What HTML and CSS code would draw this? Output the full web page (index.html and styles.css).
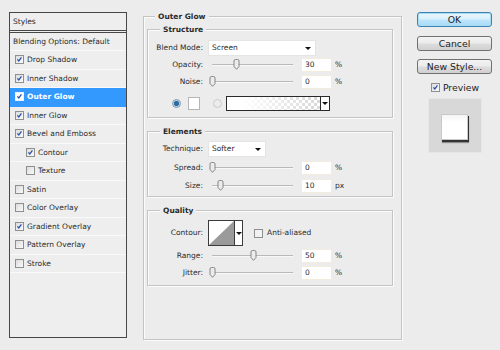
FILE: index.html
```html
<!DOCTYPE html>
<html>
<head>
<meta charset="utf-8">
<link rel="stylesheet" href="styles.css">
</head>
<body>
<div class="dialog">
  <div class="styles-panel">
    <div class="sp-head">Styles</div>
    <div class="sp-blend">Blending Options: Default</div>
    <div class="sp-row"><span class="cb on"><svg viewBox="0 0 9 9"><path d="M1.8 4.3 L3.6 6.4 L7 1.8"/></svg></span>Drop Shadow</div>
    <div class="sp-row"><span class="cb on"><svg viewBox="0 0 9 9"><path d="M1.8 4.3 L3.6 6.4 L7 1.8"/></svg></span>Inner Shadow</div>
    <div class="sp-row sel"><span class="cb on"><svg viewBox="0 0 9 9"><path d="M1.8 4.3 L3.6 6.4 L7 1.8"/></svg></span>Outer Glow</div>
    <div class="sp-row"><span class="cb on"><svg viewBox="0 0 9 9"><path d="M1.8 4.3 L3.6 6.4 L7 1.8"/></svg></span>Inner Glow</div>
    <div class="sp-row"><span class="cb on"><svg viewBox="0 0 9 9"><path d="M1.8 4.3 L3.6 6.4 L7 1.8"/></svg></span>Bevel and Emboss</div>
    <div class="sp-row sub"><span class="cb on"><svg viewBox="0 0 9 9"><path d="M1.8 4.3 L3.6 6.4 L7 1.8"/></svg></span>Contour</div>
    <div class="sp-row sub"><span class="cb"></span>Texture</div>
    <div class="sp-row"><span class="cb"></span>Satin</div>
    <div class="sp-row"><span class="cb"></span>Color Overlay</div>
    <div class="sp-row"><span class="cb on"><svg viewBox="0 0 9 9"><path d="M1.8 4.3 L3.6 6.4 L7 1.8"/></svg></span>Gradient Overlay</div>
    <div class="sp-row"><span class="cb"></span>Pattern Overlay</div>
    <div class="sp-row"><span class="cb"></span>Stroke</div>
  </div>

  <div class="group outer">
    <div class="group-title">Outer Glow</div>

    <div class="group sub structure">
      <div class="group-title">Structure</div>
      <div class="row r-blend">
        <span class="lbl">Blend Mode:</span>
        <div class="select w-blend"><span>Screen</span><i class="arrow"></i></div>
      </div>
      <div class="row r-num m2">
        <span class="lbl">Opacity:</span>
        <div class="slider"><span class="thumb" style="left:30%"><svg viewBox="0 0 7 11"><path d="M1 2 Q1 0.5 2.5 0.5 H4.5 Q6 0.5 6 2 V7.5 L3.5 10.3 L1 7.5 Z"/></svg></span></div>
        <div class="num">30</div><span class="unit">%</span>
      </div>
      <div class="row r-num m3">
        <span class="lbl">Noise:</span>
        <div class="slider"><span class="thumb" style="left:0%"><svg viewBox="0 0 7 11"><path d="M1 2 Q1 0.5 2.5 0.5 H4.5 Q6 0.5 6 2 V7.5 L3.5 10.3 L1 7.5 Z"/></svg></span></div>
        <div class="num">0</div><span class="unit">%</span>
      </div>
      <div class="row r-color">
        <span class="radio on"></span>
        <span class="swatch"></span>
        <span class="radio off"></span>
        <div class="gradbox"><div class="grad"></div><div class="gdrop"><i class="arrow"></i></div></div>
      </div>
    </div>

    <div class="group sub elements">
      <div class="group-title">Elements</div>
      <div class="row r-blend m4">
        <span class="lbl">Technique:</span>
        <div class="select w-tech"><span>Softer</span><i class="arrow"></i></div>
      </div>
      <div class="row r-num m4">
        <span class="lbl">Spread:</span>
        <div class="slider"><span class="thumb" style="left:0%"><svg viewBox="0 0 7 11"><path d="M1 2 Q1 0.5 2.5 0.5 H4.5 Q6 0.5 6 2 V7.5 L3.5 10.3 L1 7.5 Z"/></svg></span></div>
        <div class="num">0</div><span class="unit">%</span>
      </div>
      <div class="row r-num m4">
        <span class="lbl">Size:</span>
        <div class="slider"><span class="thumb" style="left:10%"><svg viewBox="0 0 7 11"><path d="M1 2 Q1 0.5 2.5 0.5 H4.5 Q6 0.5 6 2 V7.5 L3.5 10.3 L1 7.5 Z"/></svg></span></div>
        <div class="num">10</div><span class="unit">px</span>
      </div>
    </div>

    <div class="group sub quality">
      <div class="group-title">Quality</div>
      <div class="row r-contour">
        <span class="lbl">Contour:</span>
        <div class="contour">
          <svg class="cgraph" viewBox="0 0 25 24" preserveAspectRatio="none"><rect width="25" height="24" fill="#fff"/><path d="M0 24 L25 0 L25 24 Z" fill="#9a9a9a"/></svg>
          <div class="cdrop"><i class="arrow"></i></div>
        </div>
        <span class="cb aa"></span><span class="aa-text">Anti-aliased</span>
      </div>
      <div class="row r-num m3">
        <span class="lbl">Range:</span>
        <div class="slider"><span class="thumb" style="left:50%"><svg viewBox="0 0 7 11"><path d="M1 2 Q1 0.5 2.5 0.5 H4.5 Q6 0.5 6 2 V7.5 L3.5 10.3 L1 7.5 Z"/></svg></span></div>
        <div class="num">50</div><span class="unit">%</span>
      </div>
      <div class="row r-num m3">
        <span class="lbl">Jitter:</span>
        <div class="slider"><span class="thumb" style="left:0%"><svg viewBox="0 0 7 11"><path d="M1 2 Q1 0.5 2.5 0.5 H4.5 Q6 0.5 6 2 V7.5 L3.5 10.3 L1 7.5 Z"/></svg></span></div>
        <div class="num">0</div><span class="unit">%</span>
      </div>
    </div>
  </div>

  <div class="side">
    <div class="btn default">OK</div>
    <div class="btn b2">Cancel</div>
    <div class="btn b3">New Style...</div>
    <div class="preview-row"><span class="cb on"><svg viewBox="0 0 9 9"><path d="M1.8 4.3 L3.6 6.4 L7 1.8"/></svg></span>Preview</div>
    <div class="preview-box"><div class="preview-sq"></div></div>
  </div>
</div>
</body>
</html>
```
FILE: styles.css
```css
html, body {
  margin: 0;
  background: #ececec;
}
body {
  font-family: "DejaVu Sans", Verdana, sans-serif;
  font-size: 7.5px;
  line-height: 1;
  color: #2b2b2b;
}
.dialog {
  display: flex;
  align-items: flex-start;
  width: 500px;
  height: 350px;
  box-sizing: border-box;
  padding: 12px 0 0 9px;
}

/* Styles list */
.styles-panel {
  width: 118px;
  height: 326px;
  box-sizing: border-box;
  border: 1px solid #474747;
  background: #eeeeee;
}
.sp-head {
  height: 17px;
  line-height: 17px;
  padding-left: 3px;
  border-bottom: 3px double #474747;
}
.sp-blend {
  height: 17px;
  line-height: 17px;
  padding-left: 3px;
  border-bottom: 1px solid #f9f9f9;
}
.sp-row {
  height: 17.5px;
  display: flex;
  align-items: center;
  padding-left: 5px;
  border-bottom: 1px solid #f9f9f9;
}
.sp-row.sub { padding-left: 16px; }
.sp-row.sel {
  background: #3399ff;
  color: #fff;
  font-weight: bold;
  border-bottom-color: #3399ff;
}
.cb {
  width: 9px;
  height: 9px;
  box-sizing: border-box;
  border: 1px solid #8e8f8f;
  background: linear-gradient(135deg, #dcdcdc, #fafafa);
  margin-right: 3px;
  flex: none;
  display: inline-flex;
}
.cb svg { width: 7px; height: 7px; }
.cb path {
  fill: none;
  stroke: #2a52a8;
  stroke-width: 1.6;
}
.sel .cb { border-color: #e8f2ff; background: #fff; }

/* group boxes */
.group {
  border: 1px solid #c4c4c4;
  box-shadow: inset 1px 1px 0 #fbfbfb, 1px 1px 0 #fbfbfb;
}
.group-title {
  display: table;
  height: 11px;
  line-height: 11px;
  margin: -6px 0 0 8px;
  padding: 0 3px;
  background: #ececec;
  font-weight: bold;
}
.group.sub .group-title { margin-left: 12px; }
.outer {
  margin: 4px 0 0 16px;
  width: 259px;
  box-sizing: border-box;
  padding: 0 8px 53px 3px;
}
.structure { margin-top: 7px; padding-bottom: 6px; }
.elements { margin-top: 13px; padding-bottom: 3px; }
.quality { margin-top: 13px; padding-bottom: 5px; }

.row {
  display: flex;
  align-items: center;
}
.lbl {
  width: 55px;
  text-align: right;
  flex: none;
}
.r-blend { height: 16px; margin-top: 5px; }
.r-blend.m4 { margin-top: 4px; }
.r-num { height: 14px; }
.m2 { margin-top: 2px; }
.m3 { margin-top: 3px; }
.m4 { margin-top: 4px; }

.select {
  margin-left: 5px;
  height: 16px;
  box-sizing: border-box;
  background: #fff;
  border: 1px solid #e4e4e4;
  display: flex;
  align-items: center;
  justify-content: space-between;
  padding: 0 4px 0 3px;
}
.w-blend { width: 108px; }
.w-tech { width: 58px; }
.arrow {
  width: 0;
  height: 0;
  border-left: 3px solid transparent;
  border-right: 3px solid transparent;
  border-top: 3px solid #111;
}

.slider {
  position: relative;
  width: 81px;
  height: 14px;
  margin-left: 9px;
  flex: none;
}
.slider::before {
  content: "";
  position: absolute;
  left: 0;
  right: 0;
  top: 6px;
  height: 1px;
  background: #b9b9b9;
  border-bottom: 1px solid #f8f8f8;
}
.thumb {
  position: absolute;
  top: 1px;
  width: 7px;
  height: 11px;
  margin-left: -3px;
}
.thumb svg { width: 7px; height: 11px; display: block; }
.thumb path {
  fill: #ececec;
  stroke: #7a7a7a;
  stroke-width: 0.9;
}
.num {
  margin-left: 8px;
  width: 31px;
  height: 14px;
  box-sizing: border-box;
  background: #fff;
  border: 1px solid #f1ecdc;
  padding-left: 3px;
  line-height: 12px;
}
.unit { margin-left: 3px; }

.r-color { height: 15px; margin-top: 7px; padding-left: 24px; }
.radio {
  width: 9px;
  height: 9px;
  box-sizing: border-box;
  border-radius: 50%;
  flex: none;
}
.radio.on {
  border: 1px solid #7d9ab5;
  background: radial-gradient(circle, #2f6aa3 0 2.2px, #a9c6df 2.8px, #e6eef5 4px);
}
.radio.off {
  margin-left: 13px;
  border: 1px solid #c9c9c9;
  background: #ececec;
}
.swatch {
  margin-left: 7px;
  width: 12px;
  height: 13px;
  box-sizing: border-box;
  background: #fff;
  border: 1px solid #b5b5b5;
}
.gradbox {
  margin-left: 4px;
  width: 104px;
  height: 15px;
  box-sizing: border-box;
  border: 1px solid #2a2a2a;
  display: flex;
}
.grad {
  flex: 1;
  background:
    linear-gradient(to right, #ffffff 15%, rgba(255,255,255,0) 95%),
    repeating-conic-gradient(#dadada 0 25%, #ffffff 0 50%) 0 0 / 6px 6px;
}
.gdrop {
  width: 8px;
  border-left: 1px solid #2a2a2a;
  background: #fff;
  display: flex;
  align-items: center;
  justify-content: center;
}

.r-contour { height: 26px; margin-top: 4px; }
.contour {
  margin-left: 5px;
  width: 35px;
  height: 26px;
  box-sizing: border-box;
  border: 1px solid #3a3a3a;
  display: flex;
}
.cgraph { width: 25px; height: 24px; display: block; }
.cdrop {
  flex: 1;
  border-left: 1px solid #3a3a3a;
  background: #fff;
  display: flex;
  align-items: center;
  justify-content: center;
}
.cb.aa { margin-left: 11px; margin-right: 4px; background: #f2f2f2; }

/* right side */
.side {
  margin-left: 15px;
  width: 75px;
  display: flex;
  flex-direction: column;
  align-items: center;
  font-size: 9.3px;
  color: #1e1e1e;
}
.btn {
  width: 75px;
  height: 15px;
  box-sizing: border-box;
  border: 1px solid #707070;
  border-radius: 3px;
  background: linear-gradient(#f3f3f3, #ebebeb 48%, #dddddd 52%, #d0d0d0);
  text-align: center;
  line-height: 13px;
}
.btn.default {
  border-color: #3c83b4;
  box-shadow: inset 0 0 0 1px #a8dcf5;
  background: linear-gradient(#eaf6fd, #d9f0fc 48%, #bee6fd 52%, #a7d9f5);
}
.b2 { margin-top: 9px; }
.b3 { margin-top: 8px; }
.preview-row {
  margin-top: 9px;
  height: 9px;
  display: flex;
  align-items: center;
  margin-left: 1px;
}
.preview-row .cb { margin-right: 3px; }
.preview-box {
  margin-top: 6px;
  width: 54px;
  height: 55px;
  box-sizing: border-box;
  background: #d8d8d8;
  border: 1px solid #e6e6e6;
  display: flex;
  align-items: center;
  justify-content: center;
}
.preview-sq {
  width: 27px;
  height: 26px;
  box-sizing: border-box;
  margin-top: 2px;
  background: linear-gradient(#f4f4f4, #ffffff 30%);
  border: 1px solid #c9c9c9;
  box-shadow: 1px 2px 0 #333, 1px 3px 1px rgba(0,0,0,0.35);
}
```
